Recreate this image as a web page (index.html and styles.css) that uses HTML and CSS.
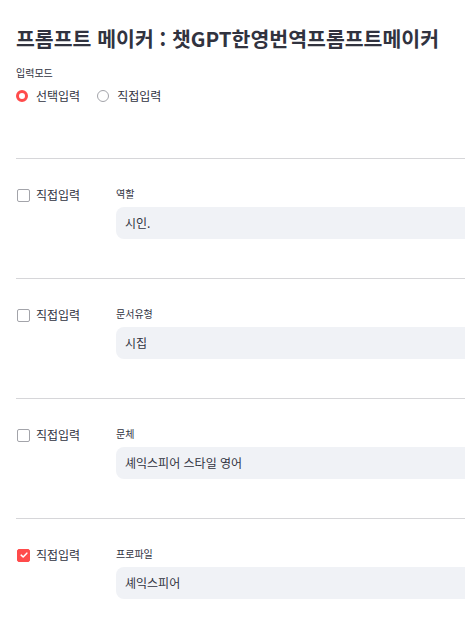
FILE: index.html
```html
<!DOCTYPE html>
<html lang="ko">
<head>
<meta charset="utf-8">
<title>프롬프트 메이커</title>
<link rel="stylesheet" href="styles.css">
</head>
<body>
<main class="app">
  <h1 class="title">프롬프트 메이커 : 챗GPT한영번역프롬프트메이커</h1>
  <div class="radio-group">
    <div class="group-label">입력모드</div>
    <div class="radios">
      <label class="radio checked"><span class="dot"></span><span>선택입력</span></label>
      <label class="radio"><span class="dot"></span><span>직접입력</span></label>
    </div>
  </div>

  <section class="field-row">
    <hr class="divider">
    <div class="row">
      <label class="check"><span class="box"></span><span>직접입력</span></label>
      <div class="field">
        <div class="field-label">역할</div>
        <div class="input">시인.</div>
      </div>
    </div>
  </section>

  <section class="field-row">
    <hr class="divider">
    <div class="row">
      <label class="check"><span class="box"></span><span>직접입력</span></label>
      <div class="field">
        <div class="field-label">문서유형</div>
        <div class="input">시집</div>
      </div>
    </div>
  </section>

  <section class="field-row">
    <hr class="divider">
    <div class="row">
      <label class="check"><span class="box"></span><span>직접입력</span></label>
      <div class="field">
        <div class="field-label">문체</div>
        <div class="input">셰익스피어 스타일 영어</div>
      </div>
    </div>
  </section>

  <section class="field-row">
    <hr class="divider">
    <div class="row">
      <label class="check checked"><span class="box"><svg viewBox="0 0 12 12" width="10" height="10"><path d="M2.6 6.2 L5 8.4 L9.4 3.8" fill="none" stroke="#fff" stroke-width="1.8" stroke-linecap="round" stroke-linejoin="round"/></svg></span><span>직접입력</span></label>
      <div class="field">
        <div class="field-label">프로파일</div>
        <div class="input">셰익스피어</div>
      </div>
    </div>
  </section>
</main>
</body>
</html>
```

FILE: styles.css
```css
html, body {
  margin: 0;
  padding: 0;
  background: #ffffff;
}
body {
  font-family: "Noto Sans CJK KR", "Noto Sans", sans-serif;
  color: #31333f;
  overflow: hidden;
}
.app {
  padding: 0 0 0 16px;
  width: 480px;
}
.title {
  margin: 22px 0 0;
  font-size: 20.5px;
  line-height: 32px;
  font-weight: 700;
  color: #31333f;
  white-space: nowrap;
}
.radio-group {
  margin-top: 11px;
}
.group-label {
  font-size: 10px;
  line-height: 16px;
}
.radios {
  margin-top: 5px;
  display: flex;
  gap: 17px;
  height: 20px;
  align-items: center;
}
.radio {
  display: flex;
  align-items: center;
  gap: 8px;
  font-size: 12px;
  line-height: 20px;
}
.dot {
  width: 12px;
  height: 12px;
  border-radius: 50%;
  border: 1px solid #a3a4aa;
  box-sizing: border-box;
  background: #fff;
}
.radio.checked .dot {
  border: 3.5px solid #ff4b4b;
}
.divider {
  margin: 52px 0 0;
  border: 0;
  border-top: 1px solid #d6d6d9;
  height: 0;
}
.field-row + .field-row .divider {
  margin-top: 39px;
}
.row {
  display: flex;
  align-items: flex-start;
  margin-top: 26px;
}
.check {
  width: 100px;
  flex: none;
  display: flex;
  align-items: center;
  gap: 6px;
  font-size: 12px;
  line-height: 20px;
}
.box {
  width: 13px;
  height: 13px;
  margin-left: 1px;
  box-sizing: border-box;
  border: 1px solid #a3a4aa;
  border-radius: 2px;
  display: flex;
  align-items: center;
  justify-content: center;
}
.check.checked .box {
  background: #ff4b4b;
  border-color: #ff4b4b;
}
.field {
  flex: 1;
  padding-top: 1px;
}
.field-label {
  font-size: 10px;
  line-height: 16px;
}
.input {
  margin-top: 5px;
  height: 32px;
  box-sizing: border-box;
  background: #f0f2f6;
  border-radius: 8px;
  padding: 0 9px;
  font-size: 12px;
  line-height: 32px;
}
```
